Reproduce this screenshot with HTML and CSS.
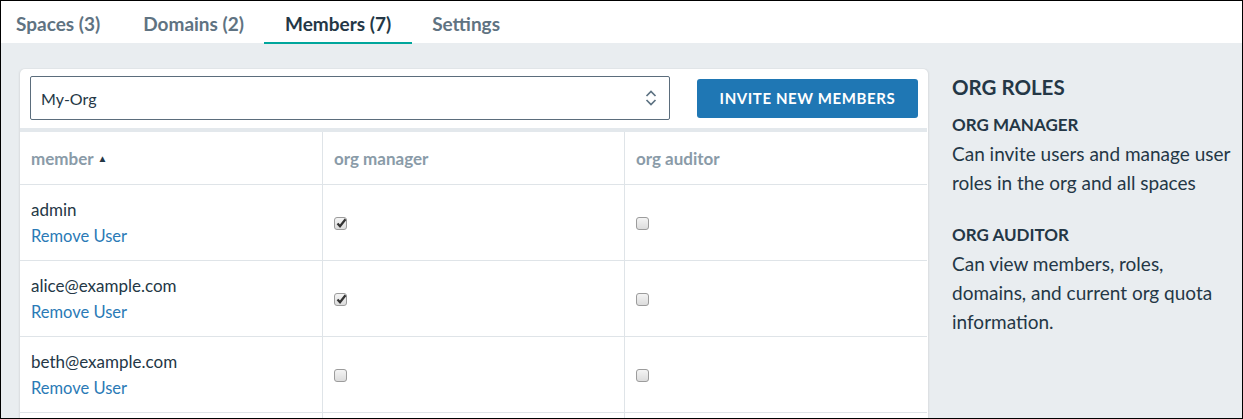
FILE: index.html
```html
<!DOCTYPE html>
<html>
<head>
<meta charset="utf-8">
<link rel="stylesheet" href="styles.css">
</head>
<body>
<div class="frame">
  <nav class="tabs">
    <div class="tab">Spaces (3)</div>
    <div class="tab">Domains (2)</div>
    <div class="tab active">Members (7)</div>
    <div class="tab">Settings</div>
  </nav>
  <div class="main">
    <section class="card">
      <div class="toolbar">
        <div class="select">
          <span>My-Org</span>
          <svg class="chev" width="12" height="16" viewBox="0 0 12 16"><path d="M1.5 6 L6 1.5 L10.5 6 M1.5 10 L6 14.5 L10.5 10" fill="none" stroke="#5d7282" stroke-width="1.7"/></svg>
        </div>
        <button class="invite">INVITE NEW MEMBERS</button>
      </div>
      <table class="members">
        <thead>
          <tr>
            <th>member <span class="sort">&#9650;</span></th>
            <th>org manager</th>
            <th>org auditor</th>
          </tr>
        </thead>
        <tbody>
          <tr>
            <td><div class="name">admin</div><a class="remove">Remove User</a></td>
            <td><span class="cb checked"><svg width="11" height="10" viewBox="0 0 11 10"><path d="M1.5 5.5 L4 8.2 L9.5 1.2" fill="none" stroke="#333" stroke-width="2.2"/></svg></span></td>
            <td><span class="cb"></span></td>
          </tr>
          <tr>
            <td><div class="name">alice@example.com</div><a class="remove">Remove User</a></td>
            <td><span class="cb checked"><svg width="11" height="10" viewBox="0 0 11 10"><path d="M1.5 5.5 L4 8.2 L9.5 1.2" fill="none" stroke="#333" stroke-width="2.2"/></svg></span></td>
            <td><span class="cb"></span></td>
          </tr>
          <tr>
            <td><div class="name">beth@example.com</div><a class="remove">Remove User</a></td>
            <td><span class="cb"></span></td>
            <td><span class="cb"></span></td>
          </tr>
          <tr>
            <td></td>
            <td></td>
            <td></td>
          </tr>
        </tbody>
      </table>
    </section>
    <aside class="roles">
      <h2>ORG ROLES</h2>
      <h3>ORG MANAGER</h3>
      <p>Can invite users and manage user roles in the org and all spaces</p>
      <h3>ORG AUDITOR</h3>
      <p>Can view members, roles, domains, and current org quota information.</p>
    </aside>
  </div>
</div>
</body>
</html>
```

FILE: styles.css
```css
html, body {
  margin: 0;
  padding: 0;
}
body {
  font-family: "Lato", "Liberation Sans", sans-serif;
  color: #243746;
}
.frame {
  width: 1243px;
  height: 419px;
  box-sizing: border-box;
  border: 1px solid #000;
  background: #e9edf0;
  overflow: hidden;
}
.tabs {
  display: flex;
  height: 42px;
  background: #fff;
}
.tab {
  height: 42px;
  box-sizing: border-box;
  padding: 4px 20px 0 20px;
  font-size: 19px;
  font-weight: 700;
  color: #5f7382;
  line-height: 38px;
}
.tab:first-child {
  padding-left: 15px;
  padding-right: 23px;
}
.tab.active {
  color: #243746;
  border-bottom: 2px solid #00a69c;
  line-height: 36px;
  height: 43px;
  padding: 5px 21px 0 21px;
}
.main {
  display: flex;
  align-items: flex-start;
  padding: 26px 0 0 19px;
  gap: 24px;
}
.card {
  width: 908px;
  flex: none;
  background: #fff;
  border-radius: 5px 5px 0 0;
  box-shadow: -1px 0 2px rgba(0,0,0,0.07), 1px 0 2px rgba(0,0,0,0.07);
}
.toolbar {
  display: flex;
  align-items: center;
  gap: 27px;
  padding: 7px 10px 8px 10px;
}
.select {
  width: 640px;
  height: 44px;
  box-sizing: border-box;
  border: 1px solid #5b6d7c;
  border-radius: 2px;
  display: flex;
  align-items: center;
  justify-content: space-between;
  padding: 0 12px 0 10px;
  font-size: 16px;
  color: #243746;
}
.chev {
  display: block;
}
.invite {
  width: 221px;
  height: 39px;
  border: none;
  border-radius: 3px;
  background: #1f77b4;
  color: #fff;
  font-family: inherit;
  font-size: 15px;
  font-weight: 700;
  letter-spacing: 0.6px;
  padding: 0;
}
.members {
  width: 907px;
  border-collapse: collapse;
  border-top: 4px solid #e3e8ec;
  table-layout: fixed;
}
.members th, .members td {
  border: 1px solid #dfe4e8;
  text-align: left;
  vertical-align: middle;
}
.members th:first-child, .members td:first-child {
  border-left: none;
  width: 280px;
}
.members th:nth-child(2), .members td:nth-child(2) {
  width: 279px;
}
.members th:last-child, .members td:last-child {
  border-right: none;
}
.members th {
  height: 52px;
  padding: 0 11px;
  font-size: 17px;
  font-weight: 700;
  color: #8a9ba8;
}
.sort {
  font-size: 10px;
  color: #243746;
  vertical-align: 3px;
}
.members td {
  height: 76px;
  padding: 1px 11px 0 11px;
  box-sizing: border-box;
}
.name {
  font-size: 17px;
  line-height: 27px;
  color: #243746;
}
.remove {
  display: block;
  font-size: 16.5px;
  line-height: 27px;
  color: #2a7ab6;
}
.cb {
  display: block;
  width: 13px;
  height: 13px;
  box-sizing: border-box;
  border: 1px solid #9c9c9c;
  border-radius: 3px;
  background: linear-gradient(#f4f4f4, #dcdcdc);
  position: relative;
}
.cb svg {
  position: absolute;
  left: 1px;
  top: 0px;
}
.roles {
  width: 285px;
  padding-top: 4px;
}
.roles h2 {
  margin: 0 0 10px 0;
  font-size: 20.5px;
  line-height: 28px;
  font-weight: 700;
}
.roles h3 {
  margin: 0;
  font-size: 17px;
  line-height: 28px;
  font-weight: 700;
}
.roles p {
  margin: 0 0 24px 0;
  font-size: 19px;
  line-height: 29px;
}
```
